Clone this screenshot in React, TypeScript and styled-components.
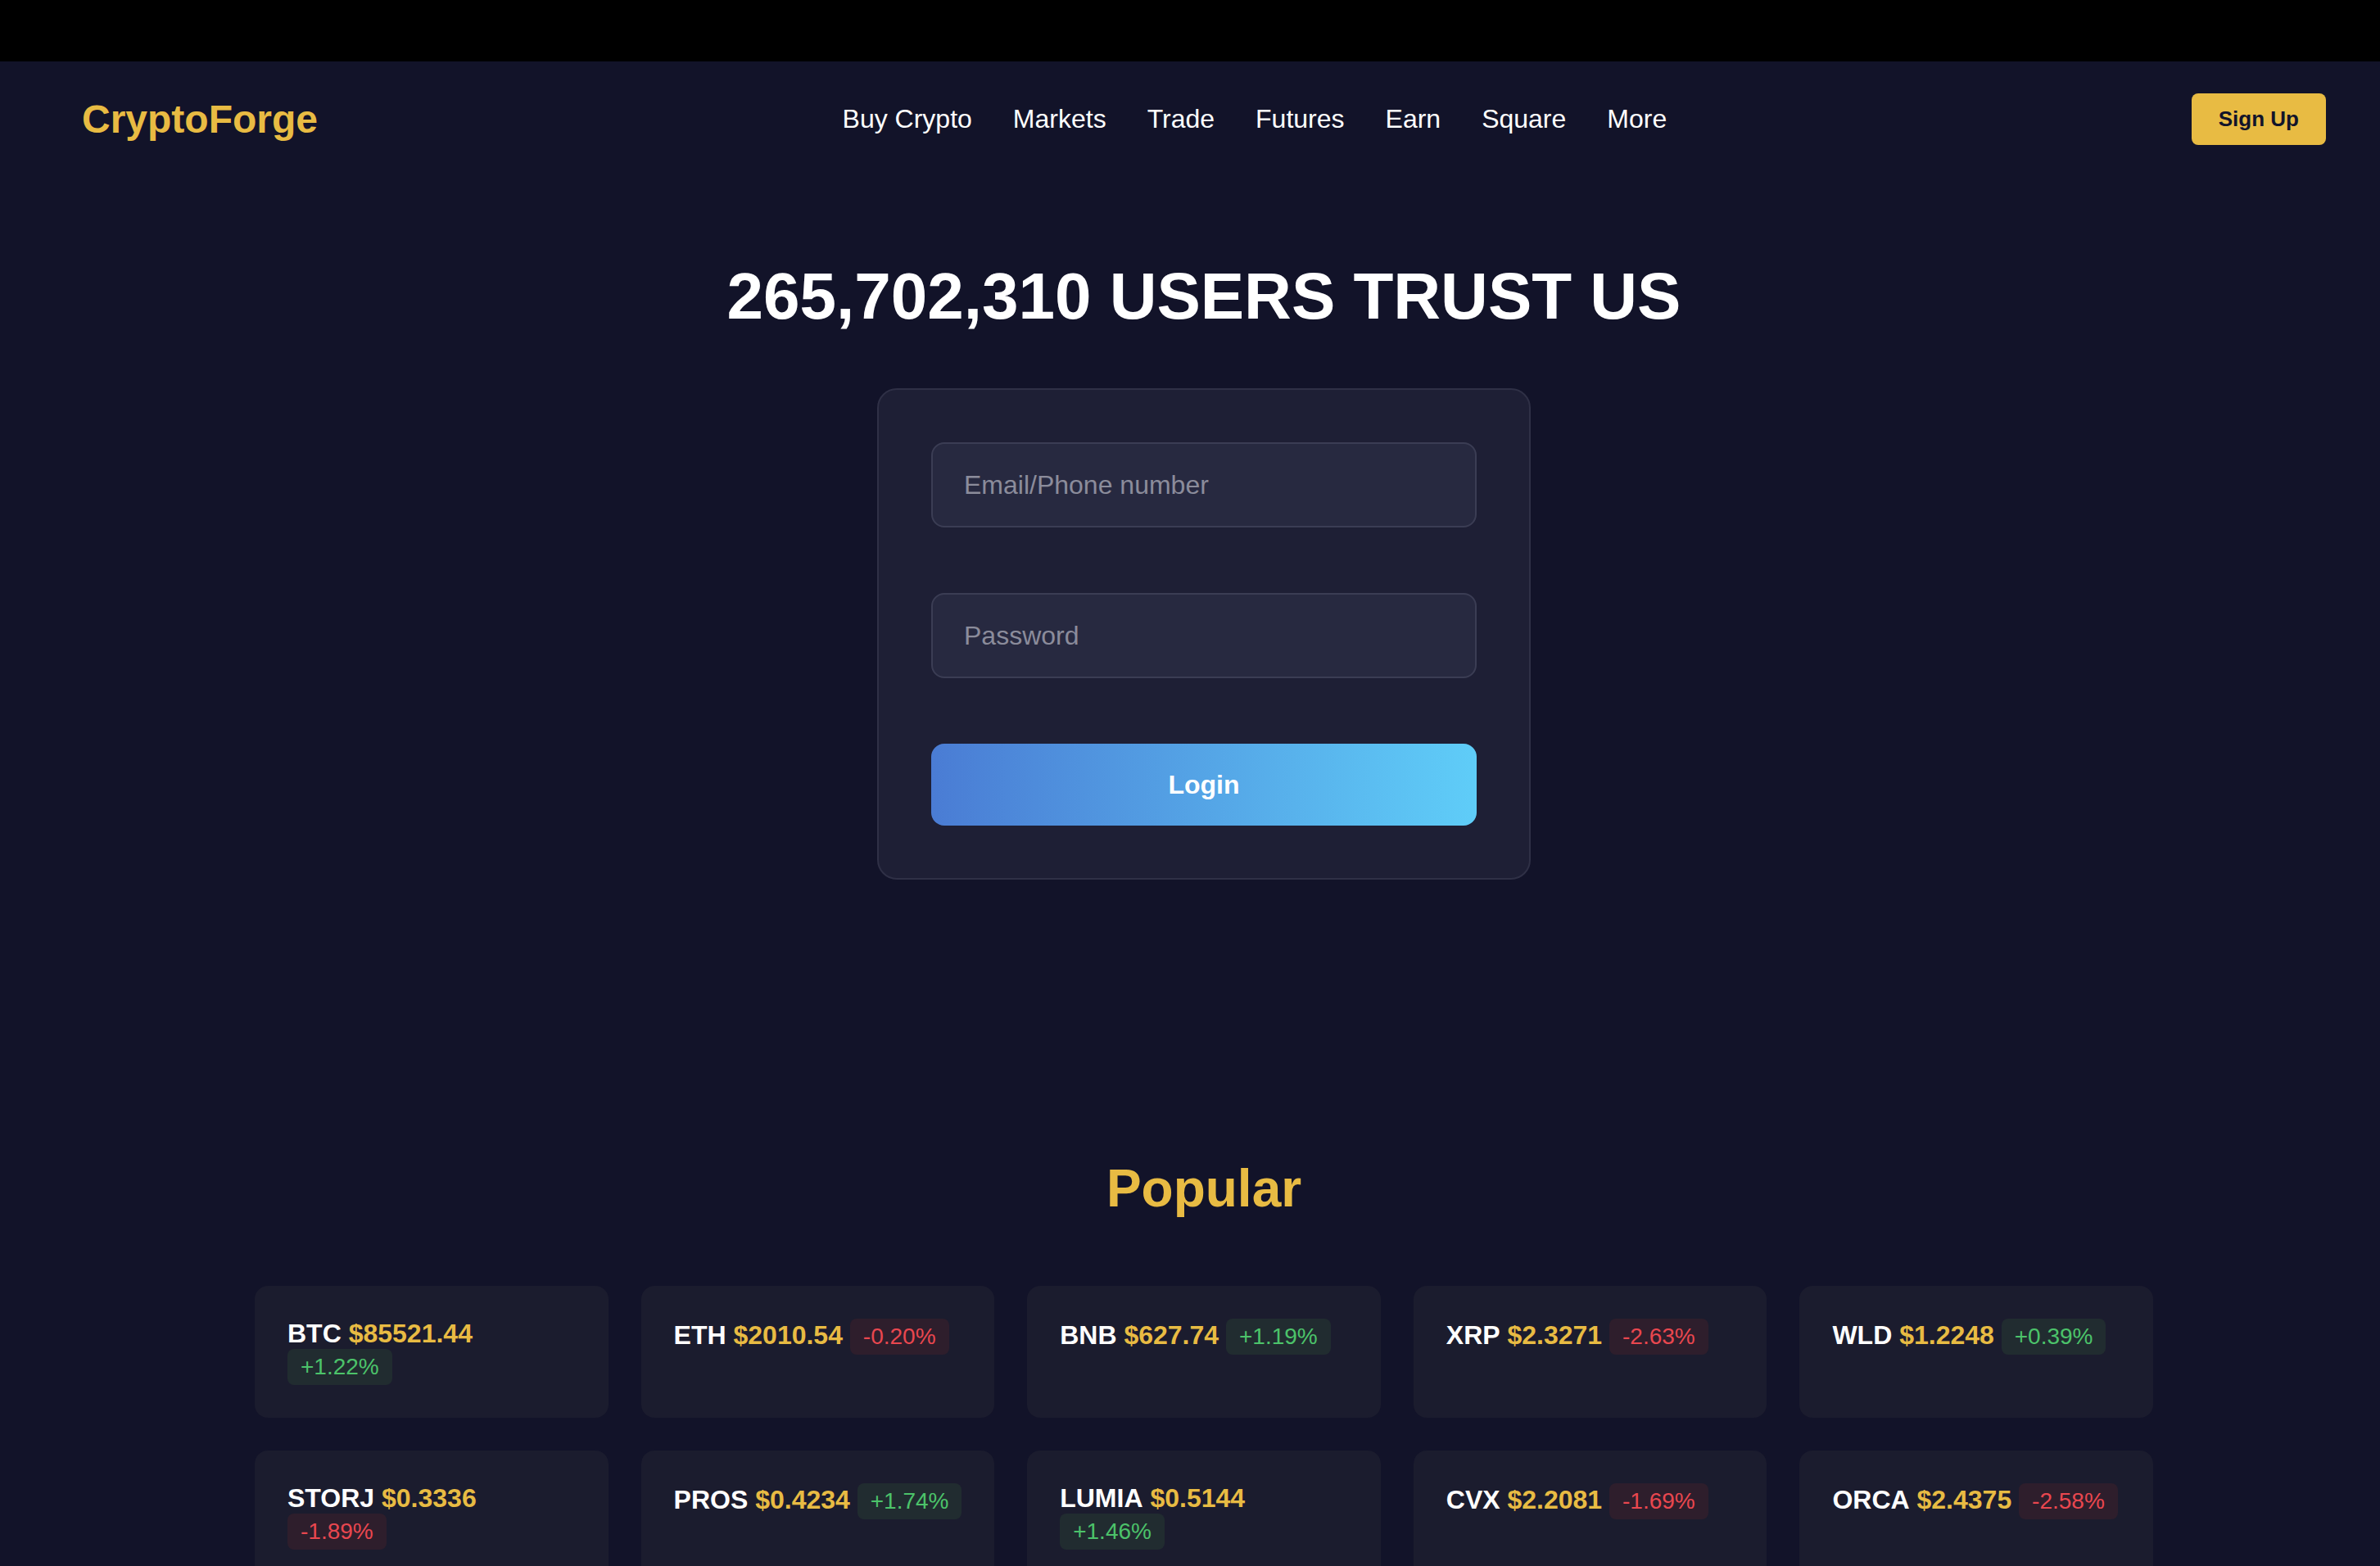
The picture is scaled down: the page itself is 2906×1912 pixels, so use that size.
import React from "react";
import styled, { createGlobalStyle } from "styled-components";

const GlobalStyle = createGlobalStyle`
  html, body {
    margin: 0;
    padding: 0;
    background: #121329;
    overflow-x: hidden;
  }
  body {
    font-family: "Liberation Sans", Arial, Helvetica, sans-serif;
    color: #ffffff;
  }
  * { box-sizing: border-box; }
`;

const Page = styled.div`
  width: 2940px;
  min-height: 1912px;
  background: #121329;
`;

const TopBar = styled.div`
  height: 75px;
  background: #000000;
`;

const Header = styled.header`
  height: 140px;
  padding: 0 100px;
  display: flex;
  align-items: center;
  justify-content: space-between;
`;

const Logo = styled.div`
  font-size: 48px;
  font-weight: 700;
  color: #e8bb43;
`;

const Nav = styled.nav`
  display: flex;
  align-items: center;
  gap: 50px;
`;

const NavLink = styled.a`
  font-size: 32px;
  color: #ffffff;
  text-decoration: none;
`;

const SignUpButton = styled.button`
  height: 63px;
  padding: 0 33px;
  border: none;
  border-radius: 8px;
  background: #e8bb43;
  color: #12142a;
  font-family: inherit;
  font-size: 26px;
  font-weight: 700;
`;

const Hero = styled.section`
  display: flex;
  flex-direction: column;
  align-items: center;
  padding-top: 101px;
`;

const HeroTitle = styled.h1`
  margin: 0;
  font-size: 80px;
  font-weight: 700;
  line-height: normal;
  color: #ffffff;
`;

const LoginCard = styled.form`
  margin-top: 66px;
  width: 798px;
  padding: 64px;
  background: #1e1f35;
  border: 2px solid #2f3046;
  border-radius: 24px;
  display: flex;
  flex-direction: column;
  gap: 80px;
`;

const Input = styled.input`
  height: 104px;
  width: 100%;
  padding: 0 38px;
  background: #272940;
  border: 2px solid #3b3d54;
  border-radius: 16px;
  color: #ffffff;
  font-family: inherit;
  font-size: 32px;
  outline: none;
  &::placeholder {
    color: #8b8c9b;
  }
`;

const LoginButton = styled.button`
  height: 100px;
  width: 100%;
  border: none;
  border-radius: 16px;
  background: linear-gradient(90deg, #4a7cd4 0%, #5fcdf8 100%);
  color: #ffffff;
  font-family: inherit;
  font-size: 32px;
  font-weight: 700;
`;

const Popular = styled.section`
  margin-top: 340px;
  display: flex;
  flex-direction: column;
  align-items: center;
`;

const PopularTitle = styled.h2`
  margin: 0 0 82px;
  font-size: 64px;
  font-weight: 700;
  line-height: normal;
  color: #e8bb43;
`;

const Grid = styled.div`
  width: 2318px;
  display: grid;
  grid-template-columns: repeat(5, 1fr);
  gap: 40px;
`;

const Card = styled.div`
  background: #1b1c2e;
  border-radius: 16px;
  padding: 40px 34px 40px 40px;
  font-size: 32px;
  line-height: normal;
`;

const Symbol = styled.span`
  font-weight: 700;
  color: #ffffff;
`;

const Price = styled.span`
  font-weight: 700;
  color: #e8bb43;
`;

const Badge = styled.span<{ $up: boolean }>`
  display: inline-block;
  padding: 6px 16px;
  border-radius: 8px;
  font-size: 28px;
  font-weight: 400;
  color: ${(p) => (p.$up ? "#4cc36a" : "#e9474f")};
  background: ${(p) => (p.$up ? "#212c30" : "#2e1e2c")};
`;

const coins = [
  { s: "BTC", p: "$85521.44", c: "+1.22%" },
  { s: "ETH", p: "$2010.54", c: "-0.20%" },
  { s: "BNB", p: "$627.74", c: "+1.19%" },
  { s: "XRP", p: "$2.3271", c: "-2.63%" },
  { s: "WLD", p: "$1.2248", c: "+0.39%" },
  { s: "STORJ", p: "$0.3336", c: "-1.89%" },
  { s: "PROS", p: "$0.4234", c: "+1.74%" },
  { s: "LUMIA", p: "$0.5144", c: "+1.46%" },
  { s: "CVX", p: "$2.2081", c: "-1.69%" },
  { s: "ORCA", p: "$2.4375", c: "-2.58%" },
];

const navItems = ["Buy Crypto", "Markets", "Trade", "Futures", "Earn", "Square", "More"];

export default function App() {
  return (
    <>
      <GlobalStyle />
      <Page>
        <TopBar />
        <Header>
          <Logo>CryptoForge</Logo>
          <Nav>
            {navItems.map((n) => (
              <NavLink key={n}>{n}</NavLink>
            ))}
          </Nav>
          <SignUpButton>Sign Up</SignUpButton>
        </Header>
        <Hero>
          <HeroTitle>265,702,310 USERS TRUST US</HeroTitle>
          <LoginCard onSubmit={(e) => e.preventDefault()}>
            <Input type="text" placeholder="Email/Phone number" />
            <Input type="password" placeholder="Password" />
            <LoginButton type="submit">Login</LoginButton>
          </LoginCard>
        </Hero>
        <Popular>
          <PopularTitle>Popular</PopularTitle>
          <Grid>
            {coins.map((c) => (
              <Card key={c.s}>
                <Symbol>{c.s}</Symbol> <Price>{c.p}</Price>{" "}
                <Badge $up={c.c.startsWith("+")}>{c.c}</Badge>
              </Card>
            ))}
          </Grid>
        </Popular>
      </Page>
    </>
  );
}
